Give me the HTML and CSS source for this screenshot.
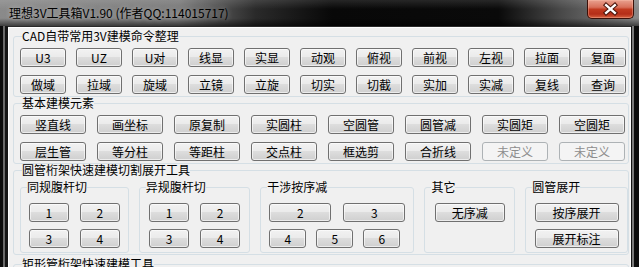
FILE: index.html
```html
<!DOCTYPE html>
<html>

<head>
    <meta charset="utf-8">
    <title>理想3V工具箱</title>
    <link rel="stylesheet" href="styles.css">
</head>

<body>
    <div class="window">
        <div class="titlebar">
            <span class="title">理想3V工具箱V1.90 (作者QQ:114015717)</span>
            <span class="close">
                <svg width="47" height="19" viewBox="0 0 47 19">
                    <path d="M19.5 5 L28.5 13 M28.5 5 L19.5 13" stroke="#4a140a" stroke-width="4.5" stroke-linecap="square"/>
                    <path d="M19.5 5 L28.5 13 M28.5 5 L19.5 13" stroke="#ffffff" stroke-width="2.4" stroke-linecap="square"/>
                </svg>
            </span>
        </div>

        <div class="client">
            <fieldset class="group">
                <legend>CAD自带常用3V建模命令整理</legend>
                <div class="cmds">
                    <button class="btn">U3</button>
                    <button class="btn">UZ</button>
                    <button class="btn">U对</button>
                    <button class="btn">线显</button>
                    <button class="btn">实显</button>
                    <button class="btn">动观</button>
                    <button class="btn">俯视</button>
                    <button class="btn">前视</button>
                    <button class="btn">左视</button>
                    <button class="btn">拉面</button>
                    <button class="btn">复面</button>
                    <button class="btn">做域</button>
                    <button class="btn">拉域</button>
                    <button class="btn">旋域</button>
                    <button class="btn">立镜</button>
                    <button class="btn">立旋</button>
                    <button class="btn">切实</button>
                    <button class="btn">切截</button>
                    <button class="btn">实加</button>
                    <button class="btn">实减</button>
                    <button class="btn">复线</button>
                    <button class="btn">查询</button>
                </div>
            </fieldset>

            <fieldset class="group">
                <legend>基本建模元素</legend>
                <div class="elements">
                    <button class="btn">竖直线</button>
                    <button class="btn">画坐标</button>
                    <button class="btn">原复制</button>
                    <button class="btn">实圆柱</button>
                    <button class="btn">空圆管</button>
                    <button class="btn">圆管减</button>
                    <button class="btn">实圆矩</button>
                    <button class="btn">空圆矩</button>
                    <button class="btn">层生管</button>
                    <button class="btn">等分柱</button>
                    <button class="btn">等距柱</button>
                    <button class="btn">交点柱</button>
                    <button class="btn">框选剪</button>
                    <button class="btn">合折线</button>
                    <button class="btn" disabled>未定义</button>
                    <button class="btn" disabled>未定义</button>
                </div>
            </fieldset>

            <fieldset class="group truss">
                <legend>圆管桁架快速建模切割展开工具</legend>
                <div class="subs">
                    <fieldset class="sub same">
                        <legend>同规腹杆切</legend>
                        <div class="row">
                            <button class="btn num">1</button>
                            <button class="btn num">2</button>
                        </div>
                        <div class="row">
                            <button class="btn num">3</button>
                            <button class="btn num">4</button>
                        </div>
                    </fieldset>

                    <fieldset class="sub diff">
                        <legend>异规腹杆切</legend>
                        <div class="row">
                            <button class="btn num">1</button>
                            <button class="btn num">2</button>
                        </div>
                        <div class="row">
                            <button class="btn num">3</button>
                            <button class="btn num">4</button>
                        </div>
                    </fieldset>

                    <fieldset class="sub clash">
                        <legend>干涉按序减</legend>
                        <div class="row">
                            <button class="btn wide">2</button>
                            <button class="btn wide">3</button>
                        </div>
                        <div class="row">
                            <button class="btn small">4</button>
                            <button class="btn small">5</button>
                            <button class="btn small">6</button>
                        </div>
                    </fieldset>

                    <fieldset class="sub other">
                        <legend>其它</legend>
                        <div class="row">
                            <button class="btn cut">无序减</button>
                        </div>
                    </fieldset>

                    <fieldset class="sub unfold">
                        <legend>圆管展开</legend>
                        <div class="row">
                            <button class="btn long">按序展开</button>
                        </div>
                        <div class="row">
                            <button class="btn long">展开标注</button>
                        </div>
                    </fieldset>
                </div>
            </fieldset>

            <fieldset class="group rect">
                <legend>矩形管桁架快速建模工具</legend>
            </fieldset>
        </div>
    </div>
</body>

</html>
```

FILE: styles.css
```css
body {
    margin: 0;
    width: 639px;
    height: 267px;
    overflow: hidden;
    font-family: "Noto Sans CJK SC", sans-serif;
    font-size: 12px;
}

.window {
    height: 267px;
    overflow: hidden;
    background: linear-gradient(to right, #0d0d0d 0 3px, #6a6a6a 3px 5px, #161616 5px 632px, #7c7c7c 632px 634px, #0d0d0d 634px);
}

.titlebar {
    height: 26px;
    display: flex;
    align-items: flex-start;
    background:
        linear-gradient(to bottom, rgba(255, 255, 255, 0.12), rgba(0, 0, 0, 0) 35%, rgba(0, 0, 0, 0) 70%, rgba(0, 0, 0, 0.55)),
        linear-gradient(to right, #8a8a8a 0, #7a7a7a 28%, #2a2a2a 40%, #080808 52%, #0a0a0a 78%, #4a4a4a 88%, #8a8a8a 100%);
}

.title {
    padding-left: 9px;
    line-height: 26px;
    color: #000;
    text-shadow: 0 0 5px rgba(255, 255, 255, 0.5);
}

.close {
    margin-left: auto;
    margin-right: 5px;
    width: 45px;
    height: 18px;
    display: flex;
    border: 1px solid #3c1008;
    border-top: none;
    border-radius: 0 0 5px 5px;
    background: linear-gradient(#e9a18f 0%, #d8705a 40%, #c13a1f 52%, #b42e18 78%, #d6603f 100%);
    box-shadow: inset 0 0 0 1px rgba(255, 200, 180, 0.35);
}

.close svg {
    margin-left: -1px;
}

.client {
    margin: 0 8px;
    height: 241px;
    overflow: hidden;
    padding: 3px 2px 0 5px;
    box-sizing: border-box;
    background: #f0f0f0;
    border-top: 1px solid #2a2a2a;
    box-shadow: inset 1px 1px 0 #ffffff, inset -1px 0 0 #ffffff;
}

fieldset {
    margin: 0;
    min-width: 0;
    border: 1px solid #d5dfe5;
    border-radius: 3px;
}

legend {
    padding: 0;
    font-size: 12px;
    line-height: 12px;
    color: #000;
}

.group {
    padding: 6px 0 2px 6px;
}

.group legend {
    margin-left: 2px;
}

.btn {
    height: 19px;
    padding: 0;
    border: 1px solid #707070;
    border-radius: 3px;
    background: linear-gradient(#f2f2f2 0%, #ebebeb 45%, #dddddd 50%, #cfcfcf 100%);
    box-shadow: inset 0 0 0 1px rgba(255, 255, 255, 0.6);
    font-family: "Noto Sans CJK SC", sans-serif;
    font-size: 12px;
    line-height: 17px;
    color: #000;
}

.btn:disabled {
    border-color: #adb2b5;
    background: #f4f4f4;
    box-shadow: none;
    color: #8d8d8d;
}

.cmds {
    display: grid;
    grid-template-columns: repeat(11, 46px);
    column-gap: 10px;
    row-gap: 8px;
}

.elements {
    display: grid;
    grid-template-columns: repeat(8, 66px);
    column-gap: 11px;
    row-gap: 8px;
}

.truss {
    padding: 5px 0 1px 6px;
}

.subs {
    display: flex;
    gap: 10px;
}

.sub {
    padding: 10px 0 4px 0;
    display: flex;
    flex-direction: column;
    gap: 7px;
}

.sub legend {
    margin-left: 6px;
}

.same { width: 108px; }
.diff { width: 111px; }
.clash { width: 154px; }
.other { width: 90px; }
.unfold { width: 102px; }

.row {
    display: flex;
    justify-content: center;
    gap: 11px;
}

.num { width: 40px; }
.wide { width: 62px; }
.small { width: 37px; }
.cut { width: 70px; }
.long { width: 84px; }

.clash .row {
    justify-content: flex-start;
    padding-left: 8px;
    gap: 12px;
}

.clash .row + .row {
    gap: 10px;
}

.rect {
    margin-top: 3px;
    padding: 0 0 0 6px;
    height: 12px;
}
```
